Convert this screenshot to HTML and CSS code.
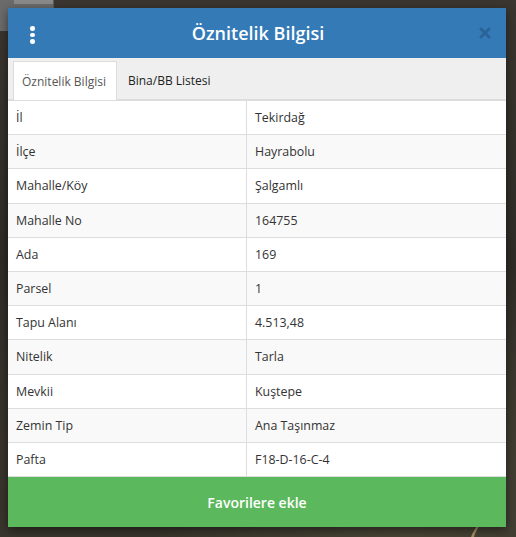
FILE: index.html
```html
<!DOCTYPE html>
<html lang="tr">
<head>
<meta charset="utf-8">
<link rel="stylesheet" href="styles.css">
</head>
<body>
<div class="map">
  <div class="tile"></div>
  <div class="road"></div>
  <div class="modal">
    <div class="header">
      <span class="kebab"><i></i><i></i><i></i></span>
      <h1 class="title">Öznitelik Bilgisi</h1>
      <svg class="close" width="12" height="12" viewBox="0 0 12 12" aria-label="Kapat">
        <path d="M2 2 L10 10 M10 2 L2 10" stroke="#2b6399" stroke-width="3" stroke-linecap="round" fill="none"/>
      </svg>
    </div>
    <div class="tabs">
      <div class="tab active">Öznitelik Bilgisi</div>
      <div class="tab">Bina/BB Listesi</div>
    </div>
    <table class="attrs">
      <tr><td>İl</td><td>Tekirdağ</td></tr>
      <tr><td>İlçe</td><td>Hayrabolu</td></tr>
      <tr><td>Mahalle/Köy</td><td>Şalgamlı</td></tr>
      <tr><td>Mahalle No</td><td>164755</td></tr>
      <tr><td>Ada</td><td>169</td></tr>
      <tr><td>Parsel</td><td>1</td></tr>
      <tr><td>Tapu Alanı</td><td>4.513,48</td></tr>
      <tr><td>Nitelik</td><td>Tarla</td></tr>
      <tr><td>Mevkii</td><td>Kuştepe</td></tr>
      <tr><td>Zemin Tip</td><td>Ana Taşınmaz</td></tr>
      <tr><td>Pafta</td><td>F18-D-16-C-4</td></tr>
    </table>
    <button class="fav">Favorilere ekle</button>
  </div>
</div>
</body>
</html>
```
FILE: styles.css
```css
html, body {
  margin: 0;
  padding: 0;
}
body {
  width: 516px;
  height: 537px;
  overflow: hidden;
  font-family: "Open Sans", "Noto Sans", sans-serif;
}
.map {
  position: relative;
  width: 516px;
  height: 537px;
  overflow: hidden;
  box-sizing: border-box;
  padding: 8px 10px 10px 8px;
  background:
    radial-gradient(circle at 80% 95%, #4a4536 0, transparent 40%),
    radial-gradient(circle at 10% 90%, #3a362d 0, transparent 35%),
    linear-gradient(180deg, #3b362f 0%, #2f2c27 50%, #37342c 100%);
}
.tile {
  position: absolute;
  left: 0;
  top: 0;
  width: 53px;
  height: 31px;
  background: #6b6b6b;
  border-right: 1px solid #5a5a5a;
}
.tile::after {
  content: "";
  position: absolute;
  left: 14px;
  top: 0;
  width: 39px;
  height: 4px;
  background: #8a8a8a;
}
.road {
  position: absolute;
  left: 470px;
  top: 515px;
  width: 60px;
  height: 60px;
  border-left: 3px solid #b9a66a;
  border-radius: 50% 0 0 0;
  opacity: 0.8;
}
.modal {
  position: relative;
  width: 498px;
  height: 519px;
  background: #fff;
  display: flex;
  flex-direction: column;
  box-shadow: 0 3px 9px rgba(0,0,0,0.5);
}
.header {
  height: 50px;
  flex: none;
  background: #337ab7;
  display: flex;
  align-items: center;
  justify-content: center;
  position: relative;
}
.title {
  margin: 0;
  color: #fff;
  font-size: 18px;
  font-weight: 600;
  line-height: 1;
  padding-left: 2px;
}
.kebab {
  position: absolute;
  left: 22px;
  top: 18px;
  display: flex;
  flex-direction: column;
  gap: 2px;
}
.kebab i {
  display: block;
  width: 4.5px;
  height: 4.5px;
  border-radius: 50%;
  background: #fff;
}
.close {
  position: absolute;
  right: 15px;
  top: 19px;
}
.tabs {
  height: 42px;
  flex: none;
  box-sizing: border-box;
  background: #efefef;
  padding: 4px 5px 0;
  display: flex;
  align-items: flex-end;
  border-bottom: 1px solid #ddd;
}
.tab {
  height: 38px;
  box-sizing: border-box;
  padding: 0 10px 0 10px;
  display: flex;
  align-items: center;
  font-size: 12px;
  color: #222;
  border: 1px solid transparent;
  border-bottom: none;
}
.tab.active {
  background: #fff;
  border-color: #ddd;
  color: #555;
  margin-bottom: -1px;
  height: 39px;
  padding: 0 10px 0 8px;
}
.attrs {
  width: 100%;
  flex: none;
  border-collapse: collapse;
  font-size: 12.4px;
  color: #333;
}
.attrs td {
  border: 1px solid #ddd;
  padding: 8px 8px;
  line-height: 17.2px;
  height: 17.2px;
}
.attrs td:first-child {
  width: 222px;
  border-left: none;
}
.attrs td:last-child {
  border-right: none;
}
.attrs tr:nth-child(even) td {
  background: #f9f9f9;
}
.fav {
  flex: 1;
  border: none;
  margin: 0;
  background: #5cb85c;
  color: #fff;
  font-family: "Open Sans", "Noto Sans", sans-serif;
  font-size: 14px;
  font-weight: 600;
}
```
